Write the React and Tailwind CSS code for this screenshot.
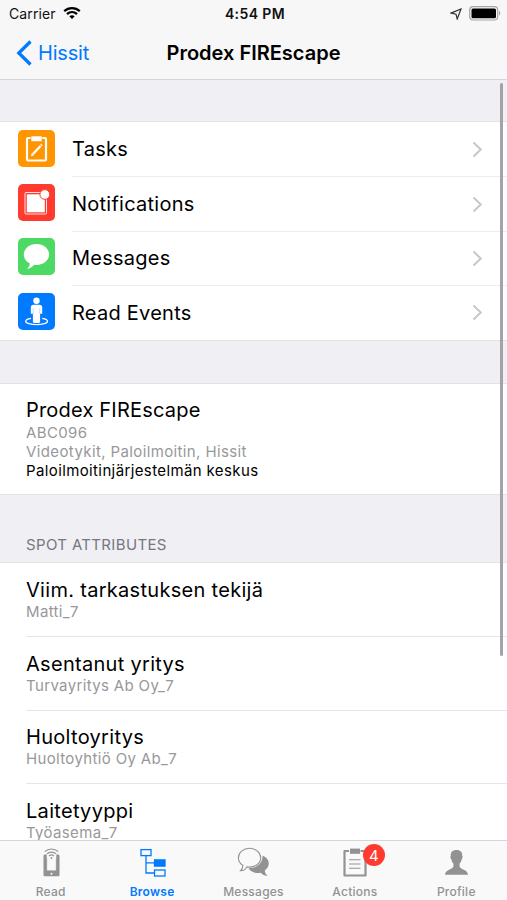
const menu = [
  { label: 'Tasks', color: 'bg-[#ff9500]', icon: TasksIcon },
  { label: 'Notifications', color: 'bg-[#ff3b30]', icon: NotificationsIcon },
  { label: 'Messages', color: 'bg-[#4cd964]', icon: BubbleIcon },
  { label: 'Read Events', color: 'bg-[#007aff]', icon: PersonIcon },
];

const attributes = [
  { name: 'Viim. tarkastuksen tekijä', value: 'Matti_7' },
  { name: 'Asentanut yritys', value: 'Turvayritys Ab Oy_7' },
  { name: 'Huoltoyritys', value: 'Huoltoyhtiö Oy Ab_7' },
  { name: 'Laitetyyppi', value: 'Työasema_7' },
];

const tabs = [
  { label: 'Read', icon: ReadIcon },
  { label: 'Browse', icon: BrowseIcon, active: true },
  { label: 'Messages', icon: ChatIcon },
  { label: 'Actions', icon: ActionsIcon, badge: 4 },
  { label: 'Profile', icon: ProfileIcon },
];

function TasksIcon() {
  return (
    <svg width="37" height="37" viewBox="0 0 37 37" fill="none">
      <rect x="9" y="8" width="19" height="22.5" rx="1.2" stroke="#fff" strokeWidth="2.2" />
      <path d="M13 6h11v5.600H13z" fill="#fff" stroke="#ff9500" strokeWidth=".6" />
      <path d="m15 24 7.500-8" stroke="#fff" strokeWidth="2.300" />
      <path d="m23 15.500.9-1" stroke="#fff" strokeWidth="2.300" />
      <path d="m12.900 26.300.9-3.200 2.300 2.100z" fill="#fff" />
    </svg>
  );
}

function NotificationsIcon() {
  return (
    <svg width="37" height="37" viewBox="0 0 37 37" fill="none">
      <rect x="7" y="8.5" width="21.5" height="21.5" rx="1" stroke="#fff" strokeOpacity=".85" />
      <rect x="8.8" y="10.3" width="18" height="18" fill="#fff" />
      <circle cx="26.8" cy="10.5" r="4.900" fill="#fff" stroke="#ff3b30" strokeWidth="1" />
    </svg>
  );
}

function BubbleIcon() {
  return (
    <svg width="37" height="37" viewBox="0 0 37 37" fill="#fff">
      <path d="M18.5 6C11.300 6 5.800 10.700 5.800 16.500c0 4 2.500 7.300 6.100 9.100-.3 2-1.200 3.900-3 5.300 3-.4 5.600-1.900 7.200-4.200.8.100 1.600.200 2.400.200 7.100 0 12.700-4.600 12.700-10.400S25.600 6 18.500 6z" />
    </svg>
  );
}

function PersonIcon() {
  return (
    <svg width="37" height="37" viewBox="0 0 37 37" fill="#fff">
      <path d="M13 25.300c-3.200.5-5.300 1.600-5.300 3 0 1.900 4.900 3.400 10.900 3.400s10.900-1.500 10.900-3.400c0-1.400-2.100-2.500-5.300-3" fill="none" stroke="#fff" strokeWidth="1.300" />
      <circle cx="18.500" cy="7.800" r="3.200" />
      <path d="M15.500 11.700h6c1.600 0 2.700 1 2.700 2.600v6.400h-2.100v8.100c0 .7-.5 1.200-1.200 1.200h-4.800c-.7 0-1.200-.5-1.200-1.200v-8.100h-2.100v-6.400c0-1.600 1.100-2.600 2.700-2.600z" />
      <path d="M15.200 15v6M21.800 15v6" stroke="#007aff" strokeWidth=".5" strokeOpacity=".5" />
    </svg>
  );
}

function ReadIcon() {
  return (
    <svg width="36" height="32" viewBox="-1 0 36 32" fill="none" stroke="#929292">
      <path d="M12.700 7.600h-1.700c-.8 0-1.500.7-1.500 1.500v18.600c0 .9.700 1.600 1.600 1.600h12.800c.9 0 1.600-.7 1.600-1.600V9.100c0-.8-.7-1.500-1.500-1.500h-1.700v16.100h-9.600z" fill="#929292" stroke="none" />
      <path d="M12.700 11.500v12.300h9.600V11.500" stroke="#929292" strokeWidth=".6" />
      <circle cx="17.500" cy="26.700" r="1" fill="#f8f8f8" stroke="none" />
      <path d="M10.800 5c3.700-3.600 9.700-3.600 13.400 0M12.900 7.200c2.500-2.400 6.700-2.400 9.200 0M15 9.300c1.400-1.300 3.600-1.300 5 0" stroke="#f9f9f9" strokeWidth="2.600" />
      <path d="M10.800 4.700c3.700-3.600 9.700-3.600 13.400 0M12.900 6.900c2.500-2.400 6.700-2.400 9.200 0M15 9.100c1.400-1.300 3.600-1.300 5 0" strokeWidth="1.100" />
      <circle cx="17.500" cy="11" r=".9" fill="#929292" stroke="none" />
    </svg>
  );
}

function BrowseIcon() {
  return (
    <svg width="36" height="32" viewBox="-1 0 36 32" fill="none" stroke="#007aff" strokeWidth="1.300">
      <rect x="6" y="2.600" width="10" height="6" />
      <path d="M11 8.600v17.400h8.500M11 15.900h8.500" />
      <rect x="19.500" y="12.900" width="10.500" height="6.200" fill="#007aff" />
      <rect x="19.500" y="23" width="10.500" height="6" />
    </svg>
  );
}

function ChatIcon() {
  return (
    <svg width="36" height="32" viewBox="-.5 0 36 32" fill="#929292">
      <path d="M27 8.500c3.800 1.600 6.300 4.500 6.300 8 0 3-1.700 5.300-4 7 0 2.200 1 3.800 3 5.300-3 .2-5.400-1-7-3-5.300 1-10.300-1-12.300-4.600C21 21.400 27.600 16 27 8.500z" />
      <path d="M14 1.300C7.700 1.300 2.900 5.500 2.900 10.700c0 3.200 1.700 5.900 4.400 7.600.1 2.300-.6 3.900-2.400 5.500 3 .1 5.400-1.400 6.500-3.900 7.500 1.300 13.800-3.200 13.800-9.200 0-5.200-5-9.400-11.200-9.400z" fill="#f9f9f9" stroke="#929292" strokeWidth="1.100" />
    </svg>
  );
}

function ActionsIcon() {
  return (
    <svg width="36" height="32" viewBox="0 0 36 32" fill="none" stroke="#929292">
      <path d="M12 4H7.500v24.500h21V4h-5" strokeWidth="2.200" strokeLinejoin="round" />
      <path d="M13 1.600h10v5.200H13z" fill="#929292" stroke="none" />
      <path d="M12 12.700h11.500M12 17h11.500M12 21.200h11.500" strokeWidth="1.100" />
    </svg>
  );
}

function ProfileIcon() {
  return (
    <svg width="36" height="32" viewBox="-.5 0 36 32" fill="#929292">
      <path d="M18 3c-4 0-6.100 2.200-5.700 6.100-.8.300-.4 2.500.6 3.300.3 1.900 1 3.100 2 4.200v3.200c-.5 2.400-7.900 2.700-8.500 7.900h23.200c-.6-5.200-8-5.500-8.500-7.900v-3.200c1-1.100 1.700-2.300 2-4.200 1-.8 1.400-3 .6-3.300.4-3.900-1.700-6.100-5.700-6.100z" />
    </svg>
  );
}

function StatusBar() {
  return (
    <div className="grid h-[27px] grid-cols-3 items-center pl-[9px] pr-[6px] text-[14px] leading-none text-[#111]">
      <div className="flex items-center gap-[7px]">
        <span className="tracking-[0.1px]">Carrier</span>
        <svg width="18" height="14" viewBox="0 0 18 14" fill="none" stroke="#000" strokeWidth="2.300" className="mb-[2px]">
          <path d="M1.200 5.200c4.400-4.200 11.200-4.200 15.600 0M4 8.200c2.900-2.700 7.100-2.700 10 0" />
          <path d="m9 13 2.700-2.700c-1.500-1.300-3.900-1.300-5.400 0z" fill="#000" stroke="none" />
        </svg>
      </div>
      <span className="text-center font-semibold tracking-[0.4px]">4:54 PM</span>
      <div className="flex items-center justify-end gap-[7px]">
        <svg width="12" height="12" viewBox="0 0 12 12" fill="none" stroke="#333" strokeWidth="1.200">
          <path d="M11 1 7.200 11 6 6.200 1 5.100z" />
        </svg>
        <svg width="32" height="15" viewBox="0 0 32 15">
          <rect x=".7" y=".7" width="28" height="13.300" rx="3.500" fill="#f7f7f7" stroke="#a5a5a5" strokeWidth="1.200" />
          <rect x="2.500" y="2.500" width="24.500" height="9.700" rx="1.500" fill="#000" />
          <path d="M30 5v4.500c1.600-.6 1.600-3.900 0-4.500z" fill="#a5a5a5" />
        </svg>
      </div>
    </div>
  );
}

function NavBar() {
  return (
    <div className="grid h-[51px] grid-cols-[1fr_auto_1fr] items-center px-4">
      <div className="flex items-center gap-[6px] text-[#007aff]">
        <svg width="16" height="26" viewBox="0 0 16 26" fill="none" stroke="#007aff" strokeWidth="3.300">
          <path d="M14.500 1.500 2.800 13l11.700 11.500" />
        </svg>
        <span className="text-[20px] tracking-[-0.2px]">Hissit</span>
      </div>
      <h1 className="text-[20px] font-semibold text-black">Prodex FIREscape</h1>
    </div>
  );
}

export default function App() {
  return (
    <div className="relative flex h-[900px] w-[507px] flex-col overflow-hidden bg-[#efeff4] font-['Inter','Liberation_Sans',sans-serif] text-black">
      <header className="h-[80px] shrink-0 border-b border-[#d5d5d8] bg-[#f7f7f8]">
        <StatusBar />
        <NavBar />
      </header>

      <main className="min-h-0 flex-1 overflow-hidden">
        <ul className="mt-[41px] border-y border-[#e2e2e5] bg-white">
          {menu.map(({ label, color, icon: Icon }, i) => (
            <li key={label} className="flex h-[54.4px] items-center pl-[18px]">
              <span className={`mb-[2px] h-[37px] w-[37px] shrink-0 overflow-hidden rounded-[5px] ${color}`}>
                <Icon />
              </span>
              <div className={`ml-[17px] flex h-full flex-1 items-center justify-between pr-[24px] ${i > 0 ? 'border-t border-[#ececee]' : ''}`}>
                <span className="text-[20px] tracking-[0.25px]">{label}</span>
                <svg width="11" height="17" viewBox="0 0 11 17" fill="none" stroke="#c7c7cc" strokeWidth="2">
                  <path d="m1.500 1.500 7.300 7-7.300 7" />
                </svg>
              </div>
            </li>
          ))}
        </ul>

        <section className="mt-[42px] h-[112px] border-y border-[#e2e2e5] bg-white pl-[26px] pt-[14px]">
          <h2 className="text-[20px] leading-[25px] tracking-[0.2px]">Prodex FIREscape</h2>
          <div className="text-[15px] leading-[19px] tracking-[0.38px] text-[#98989a]">
            <p>ABC096</p>
            <p>Videotykit, Paloilmoitin, Hissit</p>
            <p className="text-black">Paloilmoitinjärjestelmän keskus</p>
          </div>
        </section>

        <h3 className="flex h-[67px] items-end pb-[7px] pl-[26px] text-[15px] leading-[20px] tracking-[0.35px] text-[#77777c]">SPOT ATTRIBUTES</h3>

        <ul className="border-t border-[#e2e2e5] bg-white pl-[26px]">
          {attributes.map(({ name, value }, i) => (
            <li key={name} className={`h-[73.6px] ${i > 0 ? 'border-t border-[#e6e6e8] pt-[13.6px]' : 'pt-[14.6px]'}`}>
              <p className="text-[20px] leading-[26px] tracking-[0.3px]">{name}</p>
              <p className="text-[15px] leading-[17px] tracking-[0.35px] text-[#98989a]">{value}</p>
            </li>
          ))}
        </ul>
      </main>

      <nav className="grid h-[60px] shrink-0 grid-cols-5 border-t border-[#d5d5d8] bg-[#f9f9f9]">
        {tabs.map(({ label, icon: Icon, active, badge }) => (
          <div key={label} className="flex flex-col items-center pt-[6px]">
            <div className="relative">
              <Icon />
              {badge && (
                <span className="absolute left-[26px] top-[-3px] flex h-[22px] w-[22px] items-center justify-center rounded-full bg-[#ff3b30] text-[15px] leading-none text-white">
                  {badge}
                </span>
              )}
            </div>
            <span className={`mt-[5px] text-[12px] leading-[16px] tracking-[0.25px] ${active ? 'font-semibold text-[#007aff]' : 'font-medium text-[#929292]'}`}>{label}</span>
          </div>
        ))}
      </nav>

      {/* scroll indicator */}
      <div className="absolute right-[4px] top-[83px] h-[573px] w-[3px] rounded-full bg-[#a3a3a6]" />
    </div>
  );
}
